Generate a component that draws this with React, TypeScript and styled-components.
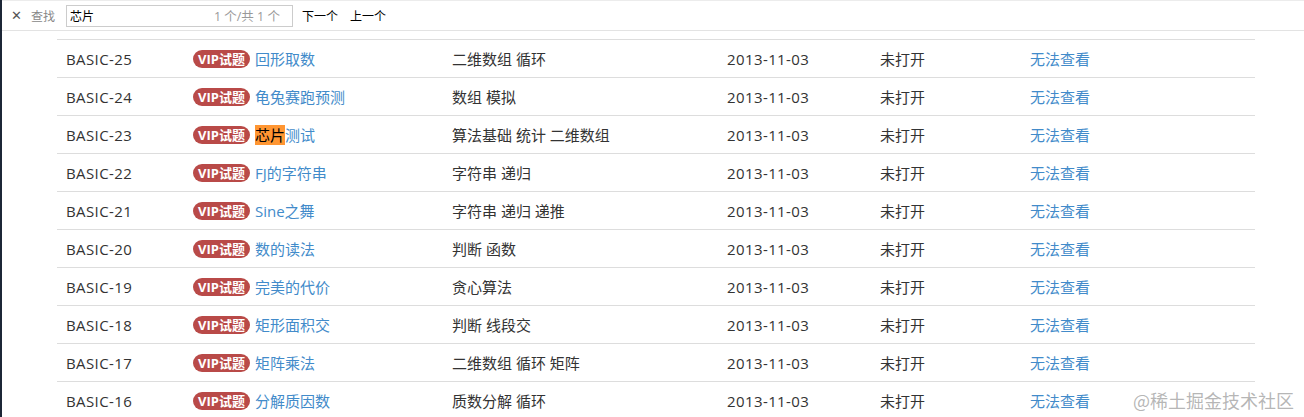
import React from "react";
import styled, { createGlobalStyle } from "styled-components";

const GlobalStyle = createGlobalStyle`
  html, body {
    margin: 0;
    padding: 0;
    background: #fff;
  }
  body {
    font-family: "Open Sans", "Noto Sans CJK SC", sans-serif;
    font-size: 15px;
    color: #333;
  }
`;

const Page = styled.div`
  display: flex;
  width: 1304px;
  height: 417px;
  overflow: hidden;
  position: relative;
`;

const SideEdge = styled.div`
  width: 2px;
  flex: none;
  background: #1c2636;
`;

const Main = styled.div`
  flex: 1;
  display: flex;
  flex-direction: column;
`;

const FindBar = styled.div`
  flex: none;
  height: 29px;
  border-top: 1px solid #ececec;
  border-bottom: 1px solid #e3e3e3;
  display: flex;
  align-items: center;
  font-size: 12px;
  padding-left: 9px;
`;

const CloseX = styled.span`
  color: #555;
  font-size: 13px;
  width: 12px;
  margin-right: 8px;
  font-family: "DejaVu Sans", sans-serif;
`;

const FindLabel = styled.span`
  color: #888;
  margin-right: 11px;
`;

const FindInput = styled.div`
  width: 210px;
  height: 20px;
  border: 1px solid #ccc;
  display: flex;
  align-items: center;
  justify-content: space-between;
  padding: 0 12px 0 3px;
  box-sizing: content-box;
  margin-right: 9px;
`;

const Query = styled.span`
  color: #000;
`;

const Count = styled.span`
  color: #999;
  font-size: 12.5px;
`;

const NavButton = styled.span`
  color: #000;
  margin-right: 12px;
`;

const Table = styled.div`
  flex: none;
  margin: 8px 0 0 55px;
  width: 1198px;
`;

const Row = styled.div`
  display: grid;
  grid-template-columns: 127px 259px 275px 153px 150px 1fr;
  height: 37px;
  border-top: 1px solid #dddddd;
  align-items: center;
`;

const Cell = styled.div<{ $link?: boolean; $latin?: boolean }>`
  padding-left: 9px;
  color: ${(p) => (p.$link ? "#428bca" : "#333")};
  letter-spacing: ${(p) => (p.$latin ? "0.4px" : "0")};
  white-space: nowrap;
  display: flex;
  align-items: center;
`;

const Badge = styled.span`
  display: inline-block;
  background: #b94a48;
  color: #fff;
  font-weight: 700;
  font-size: 13px;
  line-height: 18px;
  height: 18px;
  padding: 0 5px;
  border-radius: 9px;
  margin-right: 5px;
`;

const Title = styled.span`
  color: #428bca;
`;

const Hit = styled.mark`
  background: #ff9632;
  color: #000;
`;

const Watermark = styled.div`
  position: absolute;
  right: 10px;
  bottom: 7px;
  font-size: 18px;
  line-height: 20px;
  color: rgba(150, 150, 150, 0.7);
  font-family: "Noto Sans CJK SC", sans-serif;
`;

const rows = [
  { id: "BASIC-25", title: "回形取数", tags: "二维数组 循环" },
  { id: "BASIC-24", title: "龟兔赛跑预测", tags: "数组 模拟" },
  { id: "BASIC-23", title: "芯片测试", tags: "算法基础 统计 二维数组", hit: true },
  { id: "BASIC-22", title: "FJ的字符串", tags: "字符串 递归" },
  { id: "BASIC-21", title: "Sine之舞", tags: "字符串 递归 递推" },
  { id: "BASIC-20", title: "数的读法", tags: "判断 函数" },
  { id: "BASIC-19", title: "完美的代价", tags: "贪心算法" },
  { id: "BASIC-18", title: "矩形面积交", tags: "判断 线段交" },
  { id: "BASIC-17", title: "矩阵乘法", tags: "二维数组 循环 矩阵" },
  { id: "BASIC-16", title: "分解质因数", tags: "质数分解 循环" },
];

export default function App() {
  return (
    <Page>
      <GlobalStyle />
      <SideEdge />
      <Main>
        <FindBar>
          <CloseX>✕</CloseX>
          <FindLabel>查找</FindLabel>
          <FindInput>
            <Query>芯片</Query>
            <Count>1 个/共 1 个</Count>
          </FindInput>
          <NavButton>下一个</NavButton>
          <NavButton>上一个</NavButton>
        </FindBar>
        <Table>
          {rows.map((r) => (
            <Row key={r.id}>
              <Cell $latin>{r.id}</Cell>
              <Cell>
                <Badge>VIP试题</Badge>
                {r.hit ? (
                  <Title>
                    <Hit>芯片</Hit>测试
                  </Title>
                ) : (
                  <Title>{r.title}</Title>
                )}
              </Cell>
              <Cell>{r.tags}</Cell>
              <Cell $latin>2013-11-03</Cell>
              <Cell>未打开</Cell>
              <Cell $link>无法查看</Cell>
            </Row>
          ))}
        </Table>
      </Main>
      <Watermark>@稀土掘金技术社区</Watermark>
    </Page>
  );
}
